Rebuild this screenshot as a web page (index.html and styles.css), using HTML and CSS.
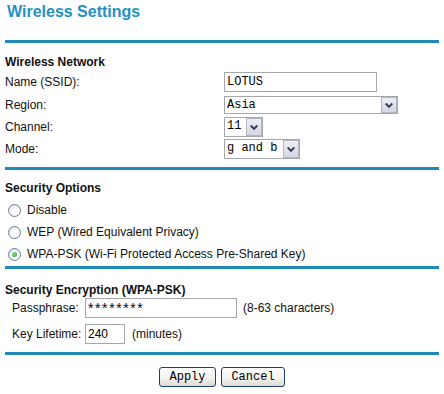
FILE: index.html
```html
<!DOCTYPE html>
<html>
<head>
<meta charset="utf-8">
<title>Wireless Settings</title>
<link rel="stylesheet" href="styles.css">
</head>
<body>
<div class="page">
  <h1 class="title">Wireless Settings</h1>
  <div class="rule"></div>

  <section class="sec sec-net">
    <h2 class="sec-head">Wireless Network</h2>
    <div class="net-grid">
      <div class="lbl">Name (SSID):</div>
      <div class="ctl"><input class="textbox ssid" type="text" value="LOTUS"></div>

      <div class="lbl">Region:</div>
      <div class="ctl">
        <span class="select sel-region">
          <span class="sel-val">Asia</span>
          <span class="sel-btn"><svg width="15" height="16" viewBox="0 0 15 16"><path d="M4 6.5 L7.5 10 L11 6.5" fill="none" stroke="#34405e" stroke-width="2.2"/></svg></span>
        </span>
      </div>

      <div class="lbl">Channel:</div>
      <div class="ctl">
        <span class="select sel-channel">
          <span class="sel-val">11</span>
          <span class="sel-btn"><svg width="15" height="16" viewBox="0 0 15 16"><path d="M4 6.5 L7.5 10 L11 6.5" fill="none" stroke="#34405e" stroke-width="2.2"/></svg></span>
        </span>
      </div>

      <div class="lbl">Mode:</div>
      <div class="ctl">
        <span class="select sel-mode">
          <span class="sel-val">g and b</span>
          <span class="sel-btn"><svg width="15" height="16" viewBox="0 0 15 16"><path d="M4 6.5 L7.5 10 L11 6.5" fill="none" stroke="#34405e" stroke-width="2.2"/></svg></span>
        </span>
      </div>
    </div>
  </section>
  <div class="rule rule-2"></div>

  <section class="sec sec-opts">
    <h2 class="sec-head">Security Options</h2>
    <div class="radio-list">
      <label class="radio-row"><span class="radio"></span><span>Disable</span></label>
      <label class="radio-row"><span class="radio"></span><span>WEP (Wired Equivalent Privacy)</span></label>
      <label class="radio-row"><span class="radio checked"></span><span>WPA-PSK (Wi-Fi Protected Access Pre-Shared Key)</span></label>
    </div>
  </section>
  <div class="rule rule-3"></div>

  <section class="sec sec-enc">
    <h2 class="sec-head">Security Encryption (WPA-PSK)</h2>
    <div class="enc-grid">
      <div class="lbl">Passphrase:</div>
      <div class="ctl"><input class="textbox pass" type="text" value="********"><span class="hint">(8-63 characters)</span></div>
      <div class="lbl">Key Lifetime:</div>
      <div class="ctl"><input class="textbox life" type="text" value="240"><span class="hint hint-min">(minutes)</span></div>
    </div>
  </section>
  <div class="rule rule-4"></div>

  <div class="actions">
    <button class="btn btn-apply" type="button">Apply</button>
    <button class="btn btn-cancel" type="button">Cancel</button>
  </div>
</div>
</body>
</html>
```

FILE: styles.css
```css
* { box-sizing: border-box; }

html, body {
  margin: 0;
  padding: 0;
  background: #ffffff;
}

body {
  font-family: "Liberation Sans", Arial, sans-serif;
  font-size: 12px;
  color: #111111;
}

.page {
  width: 444px;
  padding: 0 5px;
}

.title {
  margin: 0;
  padding: 2px 0 0 2px;
  height: 40px;
  font-size: 16px;
  line-height: 20px;
  font-weight: bold;
  color: #2491c2;
}

.rule {
  height: 3px;
  background: #2189b5;
  width: 434px;
}

.sec-head {
  margin: 0;
  font-size: 12px;
  line-height: 16px;
  font-weight: bold;
  color: #111111;
}

/* Wireless network */
.sec-net { padding-top: 11px; padding-bottom: 7px; }

.net-grid {
  margin-top: 1px;
  display: grid;
  grid-template-columns: 219px 1fr;
  grid-template-rows: 22px 23px 22px 22px;
  align-items: center;
}

.lbl { line-height: 16px; }

.ctl {
  display: flex;
  align-items: center;
}

.textbox {
  margin: 0;
  height: 20px;
  border: 1px solid #a4a8ac;
  background: #ffffff;
  padding: 0 2px;
  font-family: "Liberation Mono", "Courier New", monospace;
  font-size: 12px;
  color: #000000;
  outline: none;
}

.ssid { width: 153px; }

.select {
  display: inline-flex;
  align-items: stretch;
  height: 19px;
  border: 1px solid #a4a8ac;
  background: #ffffff;
}

.sel-val {
  flex: 1;
  padding-left: 2px;
  font-family: "Liberation Mono", "Courier New", monospace;
  font-size: 12px;
  line-height: 17px;
  color: #000000;
  white-space: pre;
}

.sel-btn {
  width: 16px;
  border: 1px solid #b4b6c4;
  background: linear-gradient(#eeeef5, #d5d6e3);
  display: flex;
  align-items: center;
  justify-content: center;
}

.sel-btn svg { display: block; }

.sel-region { width: 174px; height: 18px; }
.sel-channel { width: 39px; height: 20px; }
.sel-mode { width: 76px; height: 20px; }

/* Security options */
.sec-opts { padding-top: 10px; padding-bottom: 1px; }

.radio-list {
  margin-top: 3px;
  display: flex;
  flex-direction: column;
}

.radio-row {
  height: 22px;
  display: flex;
  align-items: center;
  gap: 6px;
  padding-left: 3px;
}

.radio {
  width: 13px;
  height: 13px;
  border-radius: 50%;
  border: 1px solid #6a7c92;
  background: radial-gradient(circle at 60% 65%, #ffffff 30%, #dcdce2 100%);
  display: flex;
  align-items: center;
  justify-content: center;
  flex: none;
}

.radio.checked::after {
  content: "";
  width: 5px;
  height: 5px;
  border-radius: 50%;
  background: radial-gradient(circle at 40% 40%, #8ee28a, #21a121);
}

/* Security encryption */
.sec-enc { padding-top: 13px; padding-bottom: 8px; }

.enc-grid {
  display: grid;
  grid-template-columns: 73px 1fr;
  grid-auto-rows: 20px;
  row-gap: 6px;
  align-items: center;
  padding-left: 7px;
}

.pass {
  width: 152px;
  font-family: "Liberation Sans", Arial, sans-serif;
  font-size: 14px;
  letter-spacing: 1.6px;
}

.life {
  width: 40px;
  font-family: "Liberation Sans", Arial, sans-serif;
}

.hint { margin-left: 6px; }
.hint-min { margin-left: 7px; }

/* Buttons */
.actions {
  margin-top: 12px;
  display: flex;
  justify-content: center;
  gap: 5px;
}

.btn {
  height: 20px;
  margin: 0;
  padding: 0;
  border: 1px solid #1c3e74;
  border-radius: 3px;
  background: linear-gradient(#ffffff 0%, #f3f3f0 55%, #dcdad0 100%);
  font-family: "Liberation Mono", "Courier New", monospace;
  font-size: 12px;
  color: #000000;
}

.btn-apply { width: 57px; }
.btn-cancel { width: 64px; }
```
